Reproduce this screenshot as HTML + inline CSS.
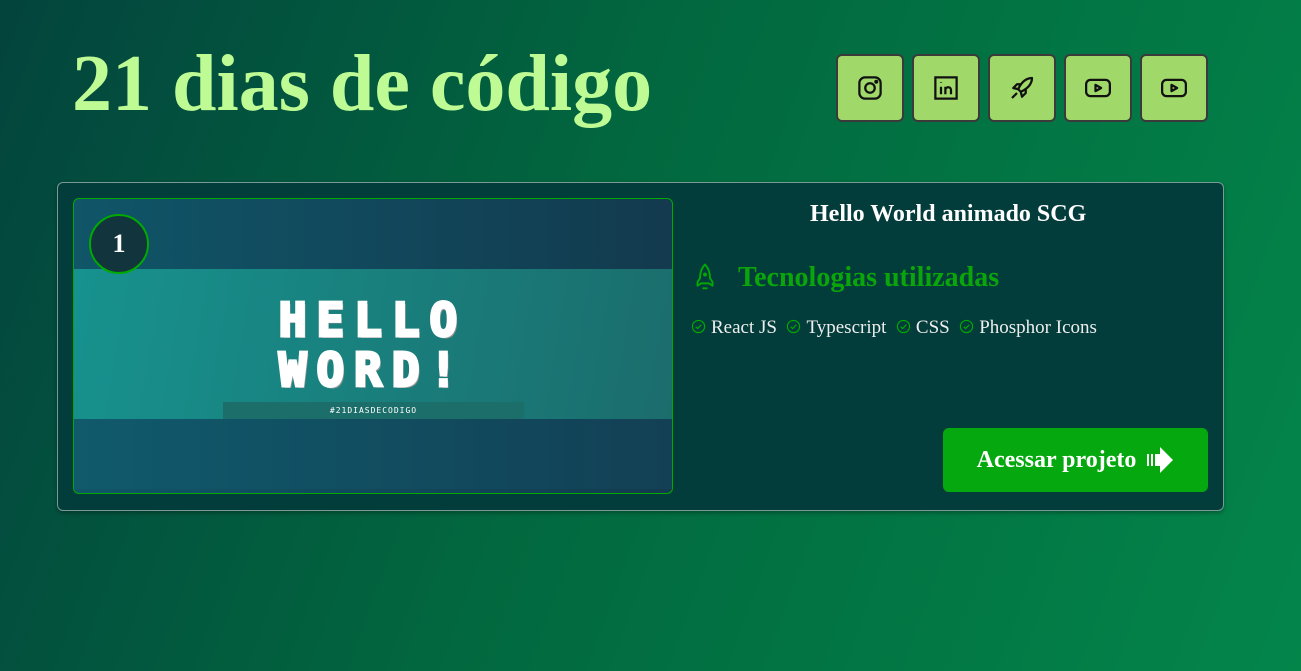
<!DOCTYPE html>
<html><head><meta charset="utf-8"><style>
*{margin:0;padding:0;box-sizing:border-box}
body{width:1301px;height:671px;overflow:hidden;background:linear-gradient(110deg,#03443d 0%,#02683f 45%,#03854a 100%);font-family:"Liberation Serif",serif;position:relative}
h1{position:absolute;left:72px;top:44px;font-size:80px;font-weight:bold;color:#bffb94;line-height:1}
.btn{position:absolute;top:54px;width:68px;height:68px;background:#a0d96a;border:2px solid #3a3a3a;border-radius:6px;display:flex;align-items:center;justify-content:center}
.card{position:absolute;left:57px;top:182px;width:1167px;height:329px;background:#033d3b;border:1px solid #7a9a95;border-radius:6px;box-shadow:0 2px 4px rgba(0,0,0,.3)}
.img{position:absolute;left:15px;top:15px;width:600px;height:296px;border:1px solid #0a0;border-radius:6px;overflow:hidden;background:linear-gradient(90deg,#105568,#133a4e)}
.mid{position:absolute;left:0;top:70px;width:100%;height:150px;background:linear-gradient(100deg,#17928e,#1b6d6c)}
.bot{position:absolute;left:0;top:220px;width:100%;height:70px;background:linear-gradient(90deg,#105a6c,#134055)}
.num{position:absolute;left:15px;top:15px;width:60px;height:60px;border-radius:50%;border:2px solid #0a0;background:#12343d;color:#fff;font-size:26px;font-weight:bold;display:flex;align-items:center;justify-content:center}
.hw{position:absolute;left:0;width:100%;text-align:center;color:#fff;font-family:"DejaVu Sans Mono",monospace;font-weight:900;font-size:46px;letter-spacing:10px;-webkit-text-stroke:3px #fff;text-shadow:2px 2px 0 #999}
.ck{display:inline-block;width:15px;height:15px;margin-right:5px;vertical-align:-1px}
</style></head><body>
<h1>21 dias de código</h1>
<div class="btn" style="left:836px"><svg width="30" height="30" viewBox="0 0 24 24" fill="none" stroke="#111" stroke-width="1.8"><rect x="3.5" y="3.5" width="17" height="17" rx="4.5"/><circle cx="12" cy="12" r="3.8"/><circle cx="17" cy="7" r=".7" fill="#111"/></svg></div>
<div class="btn" style="left:912px"><svg width="30" height="30" viewBox="0 0 24 24" fill="none" stroke="#111" stroke-width="1.8"><rect x="3.5" y="3.5" width="17" height="17"/><path d="M8 11v6M8 7.5v.5M11.5 17v-6M11.5 13.5c0-2.5 4.5-3 4.5 0V17"/></svg></div>
<div class="btn" style="left:988px"><svg width="30" height="30" viewBox="0 0 24 24" fill="none" stroke="#111" stroke-width="1.8" stroke-linejoin="round"><path d="M20 4c-5 0-9 4-11 9l2 2c5-2 9-6 9-11zM9 13l-4-1 3-3h4M11 15l1 4 3-3v-4M8 16l-4 4"/></svg></div>
<div class="btn" style="left:1064px"><svg width="30" height="30" viewBox="0 0 24 24" fill="none" stroke="#111" stroke-width="1.8" stroke-linejoin="round"><rect x="2.5" y="5.5" width="19" height="13" rx="3.5"/><path d="M10 9.5l4.5 2.5-4.5 2.5z"/></svg></div>
<div class="btn" style="left:1140px"><svg width="30" height="30" viewBox="0 0 24 24" fill="none" stroke="#111" stroke-width="1.8" stroke-linejoin="round"><rect x="2.5" y="5.5" width="19" height="13" rx="3.5"/><path d="M10 9.5l4.5 2.5-4.5 2.5z"/></svg></div>
<div class="card">
 <div class="img">
  <div class="mid">
   <div class="hw" style="top:24px">HELLO</div>
   <div class="hw" style="top:74px">WORD!</div>
   <div style="position:absolute;left:149px;top:133px;width:301px;height:17px;background:#1b6e6a;color:#fff;font-size:8px;font-family:'DejaVu Sans Mono',monospace;text-align:center;line-height:17px;letter-spacing:1px">#21DIASDECODIGO</div>
  </div>
  <div class="bot"></div>
  <div class="num">1</div>
 </div>
 <div style="position:absolute;left:752px;top:18px;color:#fff;font-size:24px;font-weight:bold;white-space:nowrap">Hello World animado SCG</div>
 <svg style="position:absolute;left:632px;top:79px" width="30" height="30" viewBox="0 0 24 24" fill="none" stroke="#0a0" stroke-width="1.5" stroke-linejoin="round"><path d="M12 2c-3 3-4 7-4 11l-2 3v3l3-2h6l3 2v-3l-2-3c0-4-1-8-4-11zM10 21h4"/><circle cx="12" cy="10" r=".8" fill="#0a0"/></svg>
 <div style="position:absolute;left:680px;top:79px;color:#0aa50a;font-size:28px;font-weight:bold;white-space:nowrap">Tecnologias utilizadas</div>
 <div style="position:absolute;left:633px;top:134px;color:#eee;font-size:19px;white-space:nowrap">
  <svg class="ck" viewBox="0 0 16 16" fill="none" stroke="#0a0" stroke-width="1.2"><circle cx="8" cy="8" r="6.5"/><path d="M5 8.2l2 2 4-4"/></svg>React JS&nbsp;&nbsp;<svg class="ck" viewBox="0 0 16 16" fill="none" stroke="#0a0" stroke-width="1.2"><circle cx="8" cy="8" r="6.5"/><path d="M5 8.2l2 2 4-4"/></svg>Typescript&nbsp;&nbsp;<svg class="ck" viewBox="0 0 16 16" fill="none" stroke="#0a0" stroke-width="1.2"><circle cx="8" cy="8" r="6.5"/><path d="M5 8.2l2 2 4-4"/></svg>CSS&nbsp;&nbsp;<svg class="ck" viewBox="0 0 16 16" fill="none" stroke="#0a0" stroke-width="1.2"><circle cx="8" cy="8" r="6.5"/><path d="M5 8.2l2 2 4-4"/></svg>Phosphor Icons
 </div>
 <div style="position:absolute;left:885px;top:245px;width:265px;height:64px;background:#05a90f;border-radius:6px;color:#fff;font-size:24px;font-weight:bold;display:flex;align-items:center;justify-content:center;gap:10px">Acessar projeto <svg width="28" height="28" viewBox="0 0 28 28" fill="#fff"><rect x="1" y="8" width="2" height="12"/><rect x="5" y="8" width="2" height="12"/><path d="M9 8h5V1l13 13-13 13v-7H9z"/></svg></div>
</div>
</body></html>
